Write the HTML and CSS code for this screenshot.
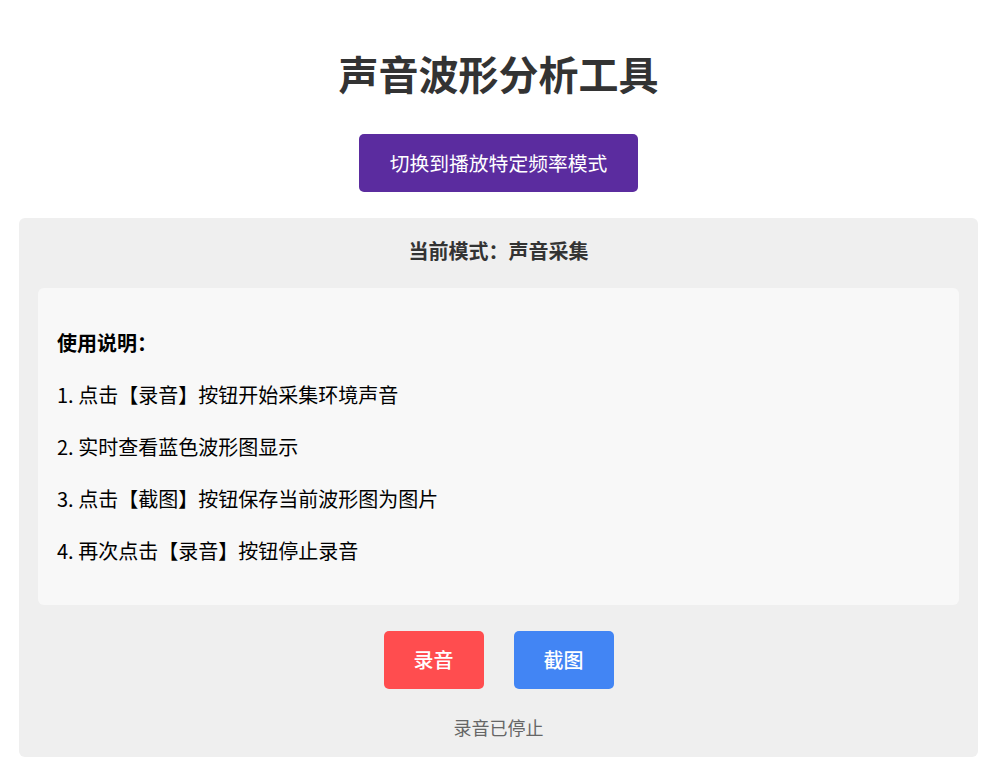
FILE: index.html
```html
<!DOCTYPE html>
<html lang="zh">
<head>
<meta charset="utf-8">
<title>声音波形分析工具</title>
<link rel="stylesheet" href="styles.css">
</head>
<body>
<div class="page">
  <h1 class="title">声音波形分析工具</h1>
  <button class="btn btn-mode">切换到播放特定频率模式</button>
  <section class="panel">
    <div class="mode">当前模式：声音采集</div>
    <div class="guide">
      <p class="guide-head">使用说明：</p>
      <p>1. 点击【录音】按钮开始采集环境声音</p>
      <p>2. 实时查看蓝色波形图显示</p>
      <p>3. 点击【截图】按钮保存当前波形图为图片</p>
      <p>4. 再次点击【录音】按钮停止录音</p>
    </div>
    <div class="actions">
      <button class="btn btn-record">录音</button>
      <button class="btn btn-shot">截图</button>
    </div>
    <div class="status">录音已停止</div>
  </section>
</div>
</body>
</html>
```

FILE: styles.css
```css
* { box-sizing: border-box; }
html, body { margin: 0; padding: 0; background: #fff; }
body {
  font-family: "Noto Sans CJK SC", "Noto Sans", "Liberation Sans", sans-serif;
  color: #000;
}
.page {
  display: flex;
  flex-direction: column;
  align-items: center;
  padding: 0 18px 0 19px;
}
.title {
  margin: 44px 0 32px;
  font-size: 40px;
  line-height: 58px;
  font-weight: 700;
  color: #333;
}
.btn {
  border: none;
  border-radius: 5px;
  color: #fff;
  font-family: inherit;
  font-size: 20px;
  line-height: 58px;
  height: 58px;
  padding: 0 30px;
  cursor: pointer;
}
.btn-mode {
  background: #5b2c9f;
  font-size: 19.8px;
  width: 279px;
  padding: 0;
}
.panel {
  align-self: stretch;
  margin-top: 26px;
  background: #efefef;
  border-radius: 6px;
  padding: 18px 19px 16px;
  display: flex;
  flex-direction: column;
  align-items: center;
}
.mode {
  font-size: 20px;
  line-height: 30px;
  font-weight: 700;
  color: #333;
}
.guide {
  align-self: stretch;
  margin-top: 22px;
  background: #f8f8f8;
  border-radius: 6px;
  padding: 20px 19px 19px;
  display: flex;
  flex-direction: column;
  gap: 18px;
}
.guide p {
  margin: 0;
  font-size: 20px;
  line-height: 34px;
}
.guide p:first-child { margin-top: 18px; }
.guide p:last-child { margin-bottom: 18px; }
.guide-head { font-weight: 700; }
.actions {
  margin-top: 26px;
  display: flex;
  gap: 30px;
}
.btn-record { background: #ff4d4f; font-weight: 500; width: 100px; padding: 0; }
.btn-shot { background: #4285f4; font-weight: 500; width: 100px; padding: 0; }
.status {
  margin-top: 24px;
  font-size: 18px;
  line-height: 28px;
  color: #666;
}
```
